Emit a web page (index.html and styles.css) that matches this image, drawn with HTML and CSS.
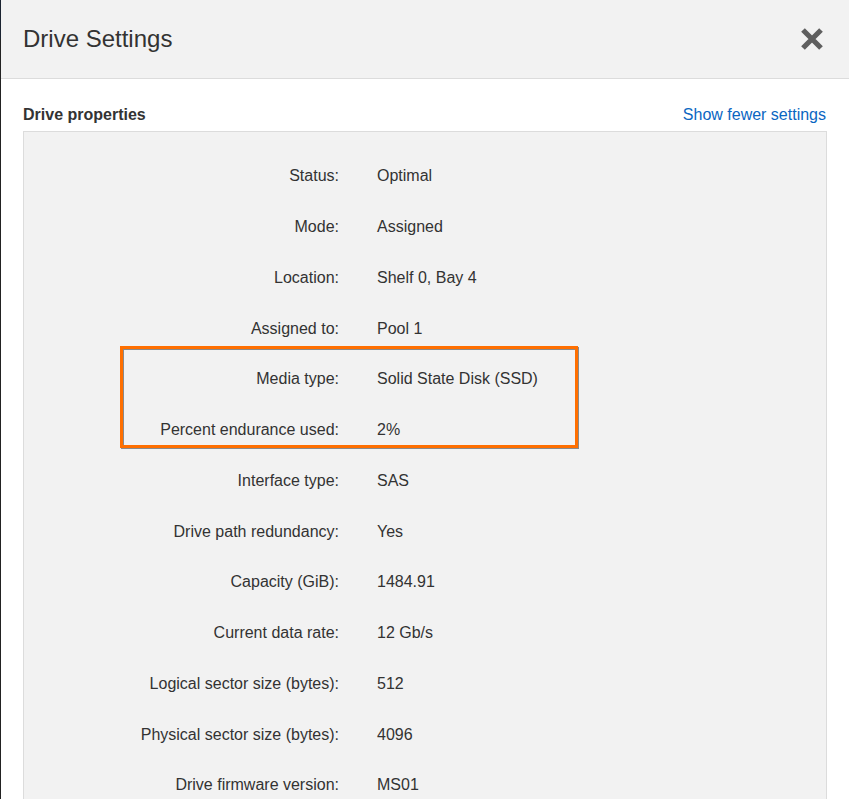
FILE: index.html
```html
<!DOCTYPE html>
<html lang="en">
<head>
<meta charset="utf-8">
<title>Drive Settings</title>
<link rel="stylesheet" href="styles.css">
</head>
<body>
<div class="dialog">
  <header class="dialog-header">
    <h1 class="dialog-title">Drive Settings</h1>
    <button class="close-btn" aria-label="Close">
      <svg width="24" height="24" viewBox="0 0 24 24"><path d="M3 3 L21 21 M21 3 L3 21" stroke="#5f5f5f" stroke-width="5.2" fill="none" stroke-linecap="butt"/></svg>
    </button>
  </header>
  <main class="dialog-body">
    <div class="section-head">
      <h2 class="section-title">Drive properties</h2>
      <a class="toggle-link" href="#">Show fewer settings</a>
    </div>
    <div class="props-panel">
      <div class="props-grid">
        <div class="prop-label">Status:</div><div class="prop-value">Optimal</div>
        <div class="prop-label">Mode:</div><div class="prop-value">Assigned</div>
        <div class="prop-label">Location:</div><div class="prop-value">Shelf 0, Bay 4</div>
        <div class="prop-label">Assigned to:</div><div class="prop-value">Pool 1</div>
        <div class="prop-label">Media type:</div><div class="prop-value">Solid State Disk (SSD)</div>
        <div class="prop-label">Percent endurance used:</div><div class="prop-value">2%</div>
        <div class="prop-label">Interface type:</div><div class="prop-value">SAS</div>
        <div class="prop-label">Drive path redundancy:</div><div class="prop-value">Yes</div>
        <div class="prop-label">Capacity (GiB):</div><div class="prop-value">1484.91</div>
        <div class="prop-label">Current data rate:</div><div class="prop-value">12 Gb/s</div>
        <div class="prop-label">Logical sector size (bytes):</div><div class="prop-value">512</div>
        <div class="prop-label">Physical sector size (bytes):</div><div class="prop-value">4096</div>
        <div class="prop-label">Drive firmware version:</div><div class="prop-value">MS01</div>
      </div>
      <div class="highlight-box"></div>
    </div>
  </main>
</div>
</body>
</html>
```

FILE: styles.css
```css
html, body {
  margin: 0;
  padding: 0;
}
body {
  background: linear-gradient(to right, #222 1px, #fff 1px);
  font-family: "Liberation Sans", Arial, sans-serif;
  color: #333;
  overflow: hidden;
  height: 799px;
}
.dialog {
  margin-left: 1px;
  position: relative;
}
.dialog::before {
  content: "";
  position: absolute;
  left: -1px;
  top: 0;
  width: 1px;
  height: 39px;
  background: #1b2331;
}
.dialog-header {
  height: 78px;
  background: #f2f2f2;
  border-bottom: 1px solid #dcdcdc;
  display: flex;
  align-items: center;
  justify-content: space-between;
  padding: 0 25px 0 22px;
}
.dialog-title {
  margin: 0;
  font-size: 24px;
  font-weight: normal;
  color: #333;
  line-height: 1;
}
.close-btn {
  border: 0;
  background: none;
  padding: 0;
  width: 24px;
  height: 24px;
  display: flex;
  cursor: pointer;
}
.dialog-body {
  padding: 0 22px 0 22px;
}
.section-head {
  display: flex;
  justify-content: space-between;
  align-items: center;
  height: 52px;
}
.section-title {
  margin: 0;
  font-size: 16px;
  font-weight: bold;
  color: #333;
  padding-top: 20px;
}
.toggle-link {
  font-size: 16px;
  color: #0a66c2;
  text-decoration: none;
  padding-top: 20px;
  margin-right: 1px;
}
.props-panel {
  position: relative;
  background: #f2f2f2;
  border: 1px solid #dcdcdc;
  padding-top: 19px;
  height: 700px;
}
.props-grid {
  display: grid;
  grid-template-columns: 315px 1fr;
  column-gap: 38px;
  grid-auto-rows: 50.75px;
  align-items: center;
  font-size: 16px;
}
.prop-label {
  text-align: right;
}
.prop-value {
  text-align: left;
}
.highlight-box {
  position: absolute;
  left: 96px;
  top: 214px;
  width: 452px;
  height: 96px;
  border: 3.5px solid #ff6f00;
  box-shadow: 1px 1px 0 #8a8a8a, inset 1px 1px 0 #8a8a8a;
}
```
